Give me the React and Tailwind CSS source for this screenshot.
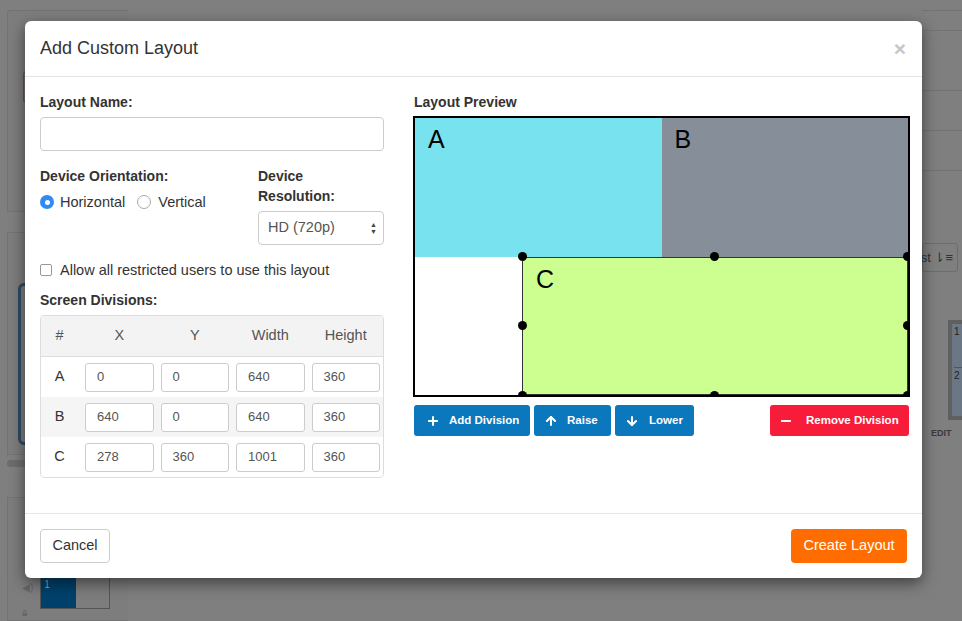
import { Plus, ArrowUp, ArrowDown, Minus } from 'lucide-react'

const DIVISIONS = [
  { id: 'A', x: 0, y: 0, w: 640, h: 360, color: '#78e2ef' },
  { id: 'B', x: 640, y: 0, w: 640, h: 360, color: '#868f99' },
  { id: 'C', x: 278, y: 360, w: 1001, h: 360, color: '#ccff8f' },
]

const SELECTED = 'C'

function Field({ value }) {
  return (
    <div className="h-[29px] border border-[#ccc] rounded-[3px] bg-white flex items-center pl-[11px] text-[13px] text-[#555]">
      {value}
    </div>
  )
}

function Handles() {
  const spots = [
    'left-0 top-0', 'left-1/2 top-0', 'left-full top-0',
    'left-0 top-1/2', 'left-full top-1/2',
    'left-0 top-full', 'left-1/2 top-full', 'left-full top-full',
  ]
  return spots.map((c, i) => (
    <span key={i} className={`absolute ${c} w-[9px] h-[9px] -ml-[4.5px] -mt-[4.5px] rounded-full bg-black`} />
  ))
}

const box = (d) => ({
  left: `${(d.x / 1280) * 100}%`,
  top: `${(d.y / 720) * 100}%`,
  width: `${(d.w / 1280) * 100}%`,
  height: `${(d.h / 720) * 100}%`,
})

function Preview() {
  return (
    <div className="w-[497px] h-[281px] border-2 border-black bg-white relative">
      <div className="absolute inset-0">
        {DIVISIONS.map((d) => (
          <div
            key={d.id}
            className={`absolute ${d.id === SELECTED ? 'border border-[#333]' : ''}`}
            style={{ ...box(d), background: d.color }}
          >
            <span className="absolute left-[13px] top-[9px] text-[25px] leading-none text-black">{d.id}</span>
          </div>
        ))}
      </div>
      <div className="absolute inset-0 overflow-hidden pointer-events-none">
        {DIVISIONS.filter((d) => d.id === SELECTED).map((d) => (
          <div key={d.id} className="absolute" style={box(d)}>
            <Handles />
          </div>
        ))}
      </div>
    </div>
  )
}

function Background() {
  return (
    <div className="absolute inset-0 bg-[#7f7f7f] flex">
      <div className="w-[128px] pl-[7px] pt-[10px] flex flex-col gap-[20px]">
        <div className="h-[204px] border border-[#737373] border-r-0 rounded-tl-[3px] bg-[#7d7d7d] pl-[15px] pt-[60px]">
          <div className="w-[10px] h-[32px] border border-[#804848] rounded-[3px] bg-[#7a6d6d]" />
        </div>
        <div className="h-[225px] border border-[#737373] border-r-0 bg-[#7d7d7d] pt-[50px] pl-[10px]">
          <div className="w-[30px] h-[162px] border-[3px] border-[#2e4b63] rounded-[6px]" />
        </div>
        <div className="h-[7px] -mt-[15px] bg-[#6d6d6d] rounded-full" />
        <div className="flex-1 border border-[#737373] border-r-0 bg-[#7d7d7d] mt-[10px] pt-[78px] pl-[14px] flex gap-[4px]">
          <div className="flex flex-col gap-[10px] text-[#666] text-[10px] pt-[4px]">
            <span>◀)</span>
            <span>🔒︎</span>
          </div>
          <div className="w-[70px] h-[33px] border border-[#555] ml-[3px]">
            <div className="w-[35px] h-[31px] bg-[#00416b] text-[#8aa] text-[10px] pl-[3px]">1</div>
          </div>
        </div>
      </div>
      <div className="flex-1" />
      <div className="w-[40px] pt-[10px] flex flex-col overflow-hidden">
        <div className="h-[20px] border-t border-[#737373]" />
        <div className="h-[60px] border-t border-[#737373]" />
        <div className="h-[40px] border-t border-[#737373]" />
        <div className="h-[40px] border-t border-[#737373]" />
        <div className="h-[73px] border-t border-[#737373]" />
        <div className="h-[29px] w-[36px] border border-[#6c6c6c] rounded-[3px] text-[13px] text-[#333] flex items-center justify-end pr-[4px] whitespace-nowrap">st ⇂≡</div>
        <div className="h-[48px]" />
        <div className="w-[20px] h-[100px] ml-[26px] border-[4px] border-[#5f5f5f] bg-[#6b7784] text-[10px] text-[#222] pl-[2px]">
          <div className="h-[44px] border-b border-[#555]">1</div>
          <div>2</div>
        </div>
        <div className="text-[9px] font-bold text-[#3a3a3a] mt-[7px] ml-[9px]">EDIT</div>
      </div>
    </div>
  )
}

export default function App() {
  return (
    <div className="w-[962px] h-[621px] relative overflow-hidden" style={{ fontFamily: '"Liberation Sans", Arial, sans-serif' }}>
      <Background />
      <div className="absolute left-[25px] top-[21px] w-[897px] h-[557px] bg-white rounded-[6px] shadow-[0_5px_15px_rgba(0,0,0,0.5)] flex flex-col text-[#333]">
        <div className="h-[56px] px-[15px] border-b border-[#e5e5e5] flex items-center justify-between">
          <h4 className="text-[18px]">Add Custom Layout</h4>
          <span className="text-[21px] font-bold text-[#c6c6c6] leading-none pr-[1px]">×</span>
        </div>

        <div className="flex-1 pl-[15px] pt-[15px] flex gap-[29px]">
          <div className="w-[344px] shrink-0 flex flex-col text-[14.5px]">
            <label className="font-bold leading-5 text-[14px]">Layout Name:</label>
            <div className="mt-[5px] h-[34px] border border-[#ccc] rounded-[4px]" />

            <div className="mt-[15px] flex">
              <div className="w-[218px]">
                <div className="font-bold leading-5 text-[14px]">Device Orientation:</div>
                <div className="mt-[6px] flex items-center leading-5">
                  <span className="w-[14px] h-[14px] rounded-full bg-[#2f8af5] flex items-center justify-center">
                    <span className="w-[5px] h-[5px] rounded-full bg-white" />
                  </span>
                  <span className="ml-[6px]">Horizontal</span>
                  <span className="ml-[12px] w-[14px] h-[14px] rounded-full border border-[#aaa] bg-white" />
                  <span className="ml-[7px]">Vertical</span>
                </div>
              </div>
              <div className="flex-1">
                <div className="font-bold leading-5 text-[14px]">Device<br />Resolution:</div>
                <div className="mt-[5px] h-[34px] border border-[#ccc] rounded-[4px] flex items-center justify-between pl-[9px] pr-[6px] text-[14.5px] text-[#555]">
                  <span>HD (720p)</span>
                  <span className="flex flex-col text-[7px] leading-[7px] text-[#444]">
                    <span>▲</span>
                    <span>▼</span>
                  </span>
                </div>
              </div>
            </div>

            <div className="mt-[15px] flex items-center leading-5">
              <span className="w-[12px] h-[12px] border border-[#999] rounded-[2px] bg-white" />
              <span className="ml-[8px]">Allow all restricted users to use this layout</span>
            </div>

            <div className="mt-[10px] font-bold leading-5 text-[14px]">Screen Divisions:</div>
            <div className="mt-[5px] border border-[#ddd] rounded-[4px] overflow-hidden">
              <div className="h-[41px] bg-[#f3f3f3] border-b border-[#ddd] grid grid-cols-[37px_repeat(4,1fr)] gap-[7px] pr-[3px] items-center text-center text-[#555]">
                <span>#</span>
                <span>X</span>
                <span>Y</span>
                <span>Width</span>
                <span>Height</span>
              </div>
              {[
                ['A', '0', '0', '640', '360'],
                ['B', '640', '0', '640', '360'],
                ['C', '278', '360', '1001', '360'],
              ].map((row, i) => (
                <div
                  key={row[0]}
                  className={`h-[40px] grid grid-cols-[37px_repeat(4,1fr)] gap-[7px] pr-[3px] items-center ${i === 1 ? 'bg-[#f5f5f5]' : 'bg-white'}`}
                >
                  <span className="text-center">{row[0]}</span>
                  {row.slice(1).map((v, j) => (
                    <Field key={j} value={v} />
                  ))}
                </div>
              ))}
            </div>
          </div>

          <div className="w-[497px] shrink-0 flex flex-col">
            <div className="font-bold leading-5 text-[14px] pl-[1px]">Layout Preview</div>
            <div className="mt-[4px]">
              <Preview />
            </div>
            <div className="mt-[8px] flex items-center pl-[1px] pr-[1px] text-[11.5px] font-bold text-white">
              <button className="h-[31px] w-[116px] bg-[#0b77bd] rounded-[3px] flex items-center pl-[12px] gap-[9px]">
                <Plus size={14} strokeWidth={3.5} />
                Add Division
              </button>
              <button className="ml-[4px] h-[31px] w-[77px] bg-[#0b77bd] rounded-[3px] flex items-center pl-[10px] gap-[9px]">
                <ArrowUp size={14} strokeWidth={3.5} />
                Raise
              </button>
              <button className="ml-[4px] h-[31px] w-[79px] bg-[#0b77bd] rounded-[3px] flex items-center pl-[10px] gap-[10px]">
                <ArrowDown size={14} strokeWidth={3.5} />
                Lower
              </button>
              <div className="flex-1" />
              <button className="h-[31px] w-[139px] bg-[#f71c3a] rounded-[3px] flex items-center pl-[9px] gap-[13px]">
                <Minus size={14} strokeWidth={3.5} />
                Remove Division
              </button>
            </div>
          </div>
        </div>

        <div className="h-[65px] border-t border-[#e5e5e5] px-[15px] flex items-center justify-between text-[14.5px]">
          <button className="h-[34px] w-[70px] border border-[#ccc] rounded-[4px] bg-white text-[#333]">Cancel</button>
          <button className="h-[34px] w-[116px] rounded-[4px] bg-[#ff6d00] text-white">Create Layout</button>
        </div>
      </div>
    </div>
  )
}
